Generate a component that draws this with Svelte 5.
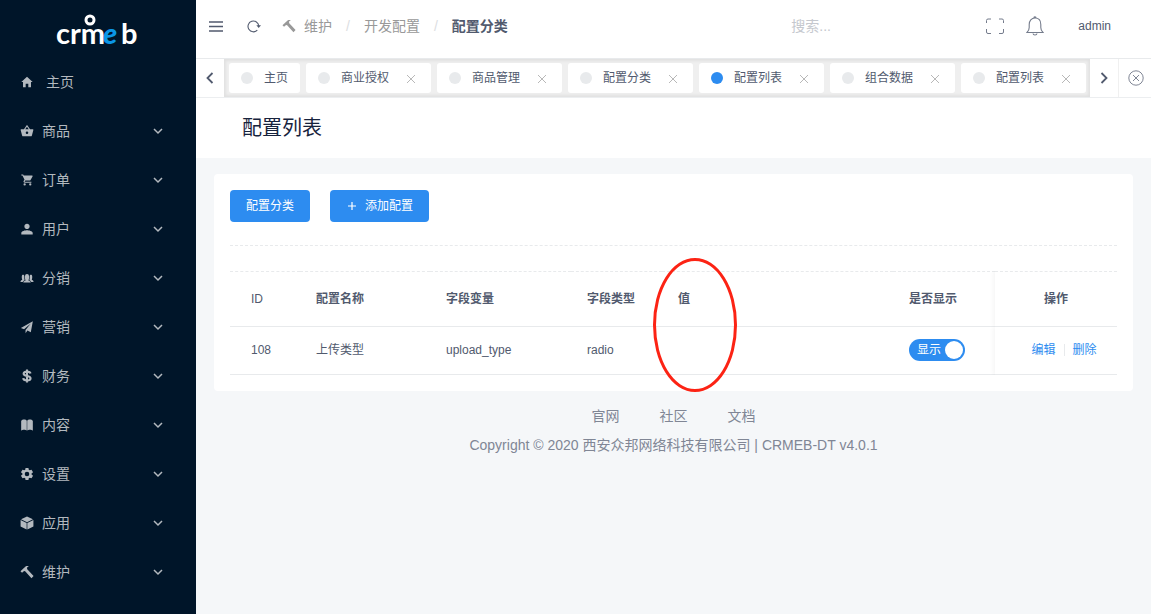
<script>
  const menu = [
    { label: '主页', icon: 'home' },
    { label: '商品', icon: 'basket', sub: true },
    { label: '订单', icon: 'cart', sub: true },
    { label: '用户', icon: 'person', sub: true },
    { label: '分销', icon: 'people', sub: true },
    { label: '营销', icon: 'plane', sub: true },
    { label: '财务', icon: 'dollar', sub: true },
    { label: '内容', icon: 'book', sub: true },
    { label: '设置', icon: 'gear', sub: true },
    { label: '应用', icon: 'cube', sub: true },
    { label: '维护', icon: 'hammer', sub: true }
  ];

  const tabs = [
    { label: '主页', fixed: true },
    { label: '商业授权' },
    { label: '商品管理' },
    { label: '配置分类' },
    { label: '配置列表', active: true },
    { label: '组合数据' },
    { label: '配置列表' }
  ];

  const footerLinks = ['官网', '社区', '文档'];

  let rows = $state([
    { id: 108, name: '上传类型', field: 'upload_type', type: 'radio', value: '', shown: true }
  ]);
  let keyword = $state('');
</script>

{#snippet icon(name)}
  {#if name === 'home'}
    <svg class="icon" viewBox="0 0 512 512" aria-hidden="true"><path d="M208 448V320h96v128h97.6V256H464L256 64 48 256h62.4v192z" /></svg>
  {:else if name === 'basket'}
    <svg class="icon" viewBox="0 0 24 24" aria-hidden="true"><path d="M17.2 9l-4.4-6.6a1 1 0 0 0-1.6 0L6.800 9H2c-.6 0-1 .5-1 1l2.600 9.500c.2.900 1 1.500 1.900 1.500h13c.9 0 1.700-.6 1.900-1.500L23 10c0-.5-.4-1-1-1zM9 9l3-4.400L15 9zm3 8.200a2.200 2.200 0 1 1 0-4.400 2.200 2.200 0 0 1 0 4.400z" /></svg>
  {:else if name === 'cart'}
    <svg class="icon" viewBox="0 0 512 512" aria-hidden="true"><circle cx="170" cy="419" r="42" /><circle cx="375" cy="419" r="42" /><path d="M48 51v42h42l75 151-32 51c-3 5-5 13-5 20 0 28 19 42 45 42h243v-40H178c-3 0-5-2-5-5l2-6 21-33h155c15 0 29-8 36-21l75-129c1-3 2-6 2-11 0-11-9-20-21-20H135l-19-41z" /></svg>
  {:else if name === 'person'}
    <svg class="icon" viewBox="0 0 512 512" aria-hidden="true"><path d="M256 256c53 0 96-43 96-96s-43-96-96-96-96 43-96 96 43 96 96 96zm0 48c-64 0-208 32-208 96v56h416v-56c0-64-144-96-208-96z" /></svg>
  {:else if name === 'people'}
    <svg class="icon" viewBox="0 0 28 28" aria-hidden="true"><path d="M10 10a4 4 0 0 1 8 0v4c0 2-.5 3.500-1 4v1l3 1.500c1 .5 1.500 1.500 1.500 2.500h-15c0-1 .5-2 1.500-2.500l3-1.500v-1c-.5-.5-1-2-1-4z" /><path d="M3.500 12c0-3.500 1-4.500 2.700-4.500S8.700 8.500 8.700 11v4c0 1.500.3 2.500.8 3.500-2 .8-3.500 1.800-4 3.500H1c0-2.500.5-3 3.500-4.500-.7-1.500-1-3.500-1-5.500zM24.500 12c0-3.500-1-4.500-2.700-4.500S19.300 8.500 19.300 11v4c0 1.500-.3 2.500-.8 3.500 2 .8 3.500 1.800 4 3.500H27c0-2.500-.5-3-3.500-4.500.7-1.500 1-3.500 1-5.500z" /></svg>
  {:else if name === 'plane'}
    <svg class="icon" viewBox="0 0 24 24" aria-hidden="true"><path d="M22 2L1.500 13.500l5.500 2.300L18.500 6 9.500 17v5.500l3.200-4.300 5.800 2.600z" /></svg>
  {:else if name === 'dollar'}
    <svg class="icon" viewBox="0 0 24 24" aria-hidden="true"><path d="M18 7.800C17.500 5.600 15.500 4.500 12 4.500S6.200 5.800 6.200 8.300c0 5.200 11.900 2.200 11.900 7.500 0 2.500-2.400 3.900-6.100 3.900s-6.200-1.500-6.500-4M12 1v22" fill="none" stroke="currentColor" stroke-width="3.600" /></svg>
  {:else if name === 'book'}
    <svg class="icon" viewBox="0 0 24 24" aria-hidden="true"><path d="M2 22V5C3 3 5 2.500 7 2.500s4 .8 4.600 2v17C10.500 20.300 9 20 7 20s-4 .5-5 2zM22 22V5C21 3 19 2.500 17 2.500s-4 .8-4.600 2v17C13.500 20.300 15 20 17 20s4 .5 5 2z" /></svg>
  {:else if name === 'gear'}
    <svg class="icon" viewBox="1 1 22 22" aria-hidden="true"><path d="M19.140 12.940c.04-.3.06-.61.06-.94s-.02-.64-.07-.94l2.030-1.580a.49.49 0 0 0 .12-.61l-1.920-3.320a.49.49 0 0 0-.59-.22l-2.390.96c-.5-.38-1.030-.7-1.620-.94l-.36-2.540a.48.48 0 0 0-.48-.41h-3.840c-.24 0-.43.17-.47.41l-.36 2.540c-.59.24-1.130.57-1.620.94l-2.390-.96c-.22-.08-.47 0-.59.22L2.740 8.870c-.12.21-.08.47.12.61l2.030 1.580c-.05.3-.09.63-.09.94s.02.64.07.94l-2.030 1.580a.49.49 0 0 0-.12.61l1.920 3.320c.12.22.37.29.59.22l2.390-.96c.5.38 1.030.7 1.620.94l.36 2.540c.05.24.24.41.48.41h3.840c.24 0 .44-.17.47-.41l.36-2.540c.59-.24 1.130-.56 1.620-.94l2.390.96c.22.08.47 0 .59-.22l1.920-3.320c.12-.22.07-.47-.12-.61zM12 15.600a3.600 3.600 0 1 1 0-7.200 3.600 3.600 0 0 1 0 7.200z" /></svg>
  {:else if name === 'cube'}
    <svg class="icon" viewBox="0 0 24 24" aria-hidden="true"><path d="M12 .8l10.200 4.700L12 10.500 1.800 5.500zM1 7l10.400 5.200v11L1 18zM23 7l-10.400 5.200v11L23 18z" /></svg>
  {:else if name === 'hammer'}
    <svg class="icon" viewBox="0 0 24 24" aria-hidden="true"><path d="M.8 10.800L9.500 2.500c1.800-1.200 3.800-1 5.500-.5-1.500.8-2.800 1.800-3 3.300l.4 1.900L23.300 19l-3.600 3.800L8.800 10.600l-1.800-.3-3.500 3.100z" /></svg>
  {/if}
{/snippet}

<div class="layout">
  <aside class="sidebar">
    <a class="logo" href="#home" aria-label="crmeb">
      <svg width="86" height="57" viewBox="0 0 86 57" aria-hidden="true">
        <text x="1" y="44">crm<tspan class="logo-e" x="48">e</tspan><tspan x="66">b</tspan></text>
        <circle cx="35" cy="20" r="4" />
      </svg>
    </a>
    <nav aria-label="主菜单">
      {#each menu as item}
        <a class="menu-item" class:single={!item.sub} href="#menu">
          {@render icon(item.icon)}
          <span>{item.label}</span>
          {#if item.sub}
            <svg class="chevron" viewBox="0 0 10 10" aria-hidden="true"><path d="M1 3l4 4 4-4" /></svg>
          {/if}
        </a>
      {/each}
    </nav>
  </aside>

  <div class="main">
    <header class="topbar">
      <button class="bare" aria-label="折叠菜单">
        <svg width="14" height="14" viewBox="0 0 14 14"><path d="M0 3h14M0 7.500h14M0 12h14" fill="none" stroke="currentColor" stroke-width="1.400" /></svg>
      </button>
      <button class="bare refresh" aria-label="刷新">
        <svg width="14" height="14" viewBox="0 0 14 14"><path d="M10.300 11.200A5.400 5.400 0 1 1 11.800 7" fill="none" stroke="currentColor" stroke-width="1.100" /><path d="M9.400 6.200H14l-2.300 2.700z" fill="currentColor" /></svg>
      </button>
      <nav class="crumbs" aria-label="路径">
        <a class="crumb" href="#maintain">{@render icon('hammer')}<span>维护</span></a>
        <i>/</i>
        <a class="crumb" href="#dev">开发配置</a>
        <i>/</i>
        <strong>配置分类</strong>
      </nav>
      <div class="tools">
        <input class="search" type="text" placeholder="搜索..." aria-label="搜索" bind:value={keyword} />
        <button class="bare thin" aria-label="全屏">
          <svg width="18" height="18" viewBox="0 0 18 18"><path d="M.5 6V3.500A1.500 1.500 0 0 1 2 2h3M13 2h3a1.500 1.500 0 0 1 1.500 1.500V6M17.500 12v3a1.500 1.500 0 0 1-1.500 1.500h-3M5 16.500H2A1.500 1.500 0 0 1 .5 15v-3" fill="none" stroke="currentColor" /></svg>
        </button>
        <button class="bare thin bell" aria-label="通知">
          <svg width="18" height="20" viewBox="0 0 18 20"><path d="M1 16.500c1.600-1.500 2.200-2.800 2.200-5V8.500c0-3.800 2.200-6.500 5.800-6.500s5.800 2.700 5.800 6.500v3c0 2.200.6 3.500 2.200 5zM8 1.800C8 .3 10 .3 10 1.800M7 17.500c.3 2 3.700 2 4 0" fill="none" stroke="currentColor" stroke-width="1.100" /></svg>
        </button>
        <button class="bare user">admin</button>
      </div>
    </header>

    <div class="tabbar">
      <button class="bare arrow" aria-label="向左">
        <svg width="12" height="12" viewBox="0 0 12 12"><path d="M8.500 1L3.500 6l5 5" /></svg>
      </button>
      <div class="tabs">
        {#each tabs as tab}
          <div class="tab" class:active={tab.active}>
            <a href="#tab"><span class="dot"></span>{tab.label}</a>
            {#if !tab.fixed}
              <button class="bare" aria-label="关闭">
                <svg width="8" height="10" viewBox="0 0 8 10"><path d="M0 2l8 8M8 2L0 10" fill="none" stroke="currentColor" /></svg>
              </button>
            {/if}
          </div>
        {/each}
      </div>
      <button class="bare arrow" aria-label="向右">
        <svg width="12" height="12" viewBox="0 0 12 12"><path d="M3.500 1l5 5-5 5" /></svg>
      </button>
      <button class="bare close-all" aria-label="关闭全部">
        <svg width="16" height="16" viewBox="0 0 16 16"><path d="M5 5l6 6M11 5l-6 6" fill="none" stroke="currentColor" /><circle cx="8" cy="8" r="7.200" fill="none" stroke="currentColor" /></svg>
      </button>
    </div>

    <h1>配置列表</h1>

    <main class="card">
      <div class="actions">
        <button class="primary">配置分类</button>
        <button class="primary add">
          <svg width="8" height="8" viewBox="0 0 8 8" aria-hidden="true"><path d="M4 0v8M0 4h8" fill="none" stroke="currentColor" stroke-width="1.200" /></svg>
          添加配置
        </button>
      </div>
      <table>
        <colgroup>
          <col class="c-id" /><col class="c-name" /><col class="c-field" /><col class="c-type" /><col /><col class="c-show" /><col class="c-ops" />
        </colgroup>
        <thead>
          <tr>
            <th>ID</th>
            <th>配置名称</th>
            <th>字段变量</th>
            <th>字段类型</th>
            <th class="marked">
              值
              <span class="ring"></span>
            </th>
            <th>是否显示</th>
            <th class="ops">操作</th>
          </tr>
        </thead>
        <tbody>
          {#each rows as row}
            <tr>
              <td>{row.id}</td>
              <td>{row.name}</td>
              <td>{row.field}</td>
              <td>{row.type}</td>
              <td>{row.value}</td>
              <td>
                <label class="switch" class:on={row.shown}>
                  <input type="checkbox" bind:checked={row.shown} />
                  <span>{row.shown ? '显示' : '隐藏'}</span>
                  <span class="knob"></span>
                </label>
              </td>
              <td class="ops">
                <div class="links">
                  <a href="#edit">编辑</a>
                  <a href="#delete">删除</a>
                </div>
              </td>
            </tr>
          {/each}
        </tbody>
      </table>
    </main>

    <footer>
      <nav aria-label="页脚">
        {#each footerLinks as link}
          <a href="#link">{link}</a>
        {/each}
      </nav>
      <p>Copyright © 2020 西安众邦网络科技有限公司 | CRMEB-DT v4.0.1</p>
    </footer>
  </div>
</div>

<style>
  :global(body) {
    margin: 0;
    background: #f5f7f9;
  }

  .layout,
  .layout * {
    box-sizing: border-box;
  }

  .layout {
    display: flex;
    min-height: 100vh;
    font-family: 'Liberation Sans', 'Noto Sans CJK SC', sans-serif;
    font-size: 12px;
    line-height: 20px;
    color: #515a6e;
  }

  a {
    color: inherit;
    text-decoration: none;
  }

  .bare {
    display: flex;
    align-items: center;
    justify-content: center;
    padding: 0;
    border: 0;
    background: none;
    color: inherit;
    font: inherit;
    cursor: pointer;
  }

  .thin {
    color: #757c8c;
  }

  .icon {
    width: 14px;
    height: 14px;
    flex: none;
    fill: currentColor;
  }

  .sidebar {
    flex: 0 0 196px;
    background: #001529;
    color: #b3b9bf;
  }

  .logo {
    display: flex;
    justify-content: center;
    height: 57px;
  }

  .logo svg {
    overflow: visible;
  }

  .logo text {
    font-family: Lato, sans-serif;
    font-size: 29px;
    font-weight: 700;
    fill: #fff;
  }

  .logo .logo-e {
    fill: #0b96e5;
    font-style: italic;
    font-weight: 900;
  }

  .logo circle {
    fill: none;
    stroke: #fff;
    stroke-width: 3;
  }

  .menu-item {
    display: flex;
    align-items: center;
    gap: 8px;
    height: 49px;
    padding: 0 33px 0 20px;
    font-size: 14px;
  }

  .menu-item.single {
    gap: 12px;
  }

  .chevron {
    width: 10px;
    height: 10px;
    margin-left: auto;
    fill: none;
    stroke: currentColor;
    stroke-width: 1.500;
  }

  .main {
    flex: 1;
    min-width: 0;
  }

  .topbar {
    display: flex;
    align-items: center;
    height: 58px;
    padding: 0 40px 6px 13px;
    background: #fff;
  }

  .refresh {
    margin: 0 21px 0 24px;
  }

  .crumbs {
    display: flex;
    align-items: center;
    gap: 14px;
    font-size: 14px;
    color: #999;
    white-space: nowrap;
  }

  .crumb {
    display: flex;
    align-items: center;
    gap: 8px;
  }

  .crumbs i {
    font-style: normal;
    color: #dcdee2;
  }

  .crumbs strong {
    color: #515a6e;
  }

  .tools {
    display: flex;
    align-items: center;
    margin-left: auto;
  }

  .search {
    width: 195px;
    padding: 0;
    border: 0;
    outline: 0;
    background: none;
    font: inherit;
    font-size: 14px;
    color: #515a6e;
  }

  .search::placeholder {
    color: #c5c8ce;
    opacity: 1;
  }

  .bell {
    margin: 0 34px 0 22px;
  }

  .tabbar {
    display: flex;
    height: 40px;
    border-top: 1px solid #e8eaec;
    border-bottom: 1px solid #eceef0;
    background: #fff;
  }

  .arrow {
    flex: 0 0 28px;
  }

  .arrow path {
    fill: none;
    stroke: currentColor;
    stroke-width: 1.800;
  }

  .tabs {
    display: flex;
    align-items: center;
    flex: 1;
    gap: 6px;
    min-width: 0;
    padding: 0 5px;
    overflow: hidden;
    background: #efefef;
    box-shadow: inset 0 0 3px 2px rgba(0, 0, 0, 0.06);
  }

  .tab {
    display: flex;
    align-items: center;
    flex: none;
    gap: 18px;
    height: 30px;
    padding: 0 16px 0 12px;
    border-radius: 3px;
    background: #fff;
  }

  .tab:first-child {
    padding-right: 12px;
  }

  .tab a {
    display: flex;
    align-items: center;
    gap: 11px;
  }

  .tab .bare {
    color: #b8b8b8;
  }

  .dot {
    width: 12px;
    height: 12px;
    border-radius: 50%;
    background: #e8eaec;
  }

  .active .dot {
    background: #2d8cf0;
  }

  .close-all {
    flex: 0 0 33px;
    padding-left: 2px;
    border-left: 1px solid #f0f0f0;
    color: #808695;
  }

  h1 {
    margin: 0;
    padding: 15px 46px;
    background: #fff;
    color: #17233d;
    font-size: 20px;
    font-weight: 400;
    line-height: 30px;
  }

  .card {
    margin: 16px 18px 0;
    padding: 16px;
    border-radius: 4px;
    background: #fff;
  }

  .actions {
    display: flex;
    gap: 20px;
    padding-bottom: 23px;
    border-bottom: 1px dashed #e8eaec;
    margin-bottom: 25px;
  }

  .primary {
    display: flex;
    align-items: center;
    gap: 9px;
    height: 32px;
    padding: 0 16px;
    border: 0;
    border-radius: 4px;
    background: #2d8cf0;
    color: #fff;
    font: inherit;
    cursor: pointer;
  }

  .add {
    padding-left: 18px;
  }

  table {
    width: 100%;
    table-layout: fixed;
    border-collapse: separate;
    border-spacing: 0;
  }

  .c-id { width: 70px; }
  .c-name { width: 130px; }
  .c-field { width: 141px; }
  .c-type { width: 91px; }
  .c-show { width: 102px; }
  .c-ops { width: 122px; }

  th,
  td {
    height: 48px;
    padding: 0 0 0 16px;
    border-bottom: 1px solid #e8eaec;
    text-align: left;
  }

  td {
    padding-bottom: 1px;
  }

  th {
    height: 56px;
    border-top: 1px dashed #e8eaec;
    font-weight: 700;
  }

  th:first-child,
  td:first-child {
    padding-left: 21px;
  }

  th:first-child {
    font-weight: 400;
  }

  .ops {
    text-align: center;
    box-shadow: -2px 0 4px rgba(0, 0, 0, 0.04);
    clip-path: inset(0 0 0 -6px);
  }

  th.ops {
    padding-left: 0;
  }

  .marked {
    position: relative;
  }

  .ring {
    position: absolute;
    top: -14px;
    left: -9px;
    width: 84px;
    height: 134px;
    border: 3px solid #fc2314;
    border-radius: 50%;
    pointer-events: none;
  }

  .switch {
    display: flex;
    align-items: center;
    justify-content: space-between;
    width: 56px;
    height: 22px;
    padding: 0 2px 0 8px;
    border-radius: 11px;
    background: #c5c8ce;
    color: #fff;
    cursor: pointer;
  }

  .switch.on {
    background: #2d8cf0;
  }

  .switch input {
    position: absolute;
    opacity: 0;
    pointer-events: none;
  }

  .knob {
    width: 18px;
    height: 18px;
    border-radius: 50%;
    background: #fff;
  }

  .links {
    display: flex;
    align-items: center;
    justify-content: center;
    line-height: 12px;
    color: #2d8cf0;
  }

  .links a + a {
    margin-left: 8px;
    padding-left: 8px;
    border-left: 1px solid #e8eaec;
  }

  footer {
    padding: 15px 0;
    text-align: center;
    font-size: 14px;
    color: #808695;
  }

  footer nav {
    display: flex;
    justify-content: center;
    gap: 40px;
  }

  footer p {
    margin: 9px 0 0;
  }
</style>
